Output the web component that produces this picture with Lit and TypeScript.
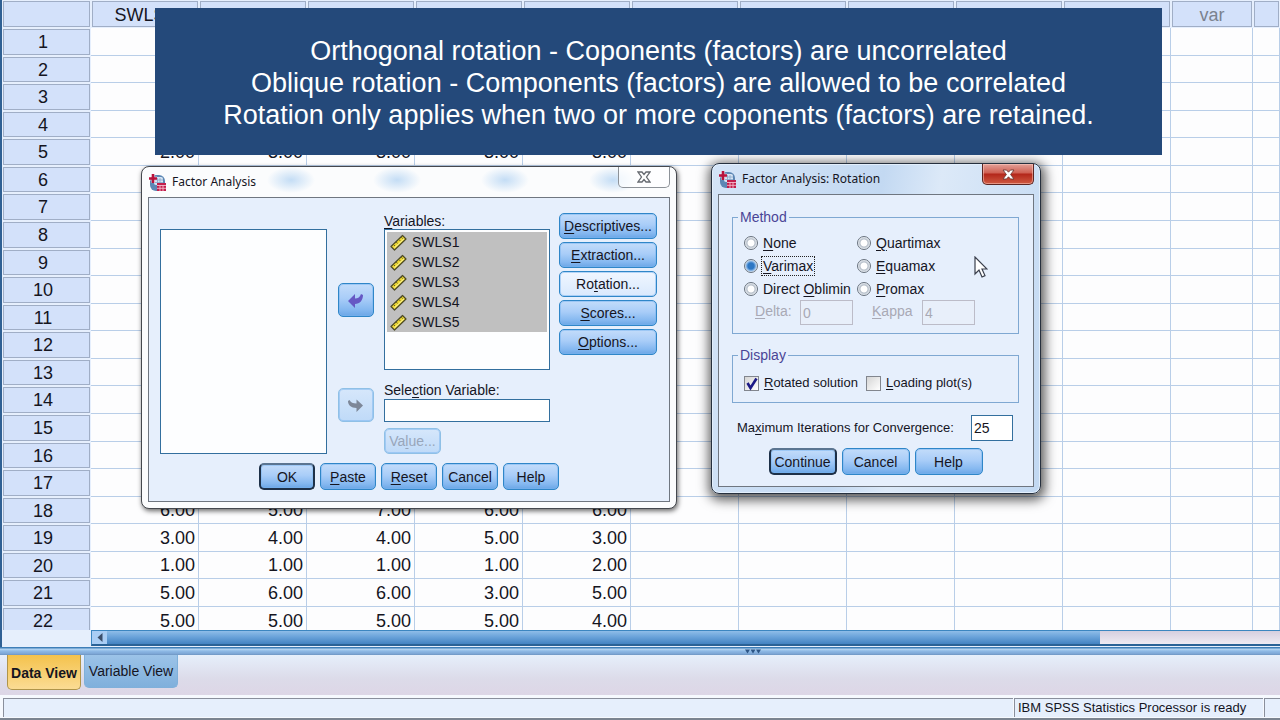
import { LitElement, html, css } from "lit";
import { customElement } from "lit/decorators.js";
import { classMap } from "lit/directives/class-map.js";

const ROWS = 22;
const VALUES: Record<number, string[]> = {
  5: ["2.00", "3.00", "3.00", "3.00", "3.00"],
  18: ["6.00", "5.00", "7.00", "6.00", "6.00"],
  19: ["3.00", "4.00", "4.00", "5.00", "3.00"],
  20: ["1.00", "1.00", "1.00", "1.00", "2.00"],
  21: ["5.00", "6.00", "6.00", "3.00", "5.00"],
  22: ["5.00", "5.00", "5.00", "5.00", "4.00"],
};
const HEADS = ["SWLS1", "SWLS2", "SWLS3", "SWLS4", "SWLS5", "var", "var", "var", "var", "var", "var", ""];

/** Text with one underlined access key; the key follows an ampersand. */
const mnemonic = (text: string) => {
  const i = text.indexOf("&");
  return i < 0 ? html`${text}` : html`${text.slice(0, i)}<u>${text[i + 1]}</u>${text.slice(i + 2)}`;
};

const sharedStyles = css`
  :host { display: block; font-family: "Liberation Sans", Arial, sans-serif; color: #15151f; }
  * { box-sizing: border-box; }
  u { text-decoration: underline; text-decoration-thickness: 1px; text-underline-offset: 2px; }
  button, input { font: inherit; color: inherit; margin: 0; }
  .btn {
    height: 27px; padding: 0; font-size: 14px; line-height: 24px; white-space: nowrap;
    border: 1px solid #2f86c8; border-radius: 5px;
    background: linear-gradient(#c3dcfa, #a9cdf8 45%, #85b8f0 80%, #6ba6e6);
    box-shadow: inset 0 0 0 1px rgba(120, 180, 240, 0.5);
  }
  .btn.default { border: 2px solid #1d3048; border-top-color: #5b7591; line-height: 22px; }
  .btn.pressed { background: linear-gradient(#f0f6ff, #d9e9fd); }
  .btn:disabled { color: #98a6ba; border-color: #8fc0e6; background: linear-gradient(#d6e7fb, #bfdaf8); }
  .window { border: 1px solid #45484e; border-radius: 8px; }
  .title { display: flex; align-items: center; gap: 5px; height: 30px; padding-left: 6px; position: relative; }
  .title h2 { margin: 0; font: 400 12px/16px "Noto Sans", "Open Sans", sans-serif; color: #15151f; }
  .close { display: grid; place-items: center; padding: 0; height: 21px; position: absolute; top: 0; right: 6px; border-radius: 0 0 5px 5px; }
  .body { margin: 0 6px 6px; border: 1px solid #6f7680; background: #e6effc; }
`;

const appIcon = html`<svg width="19" height="19" viewBox="0 0 19 19" aria-hidden="true">
  <rect x="2" y="2" width="15" height="16" rx="6" fill="#5c87b4" />
  <rect x="6" y="4" width="9" height="8" rx="2" fill="#d7e5f4" />
  <path d="M7 7h8M7 9.500h8M9.500 5v7M12 5v7" stroke="#86a5c8" stroke-width="0.800" />
  <path d="M5 1v9M1 5.500h8" stroke="#fff" stroke-width="4" opacity="0.500" />
  <path d="M5 1v9M1 5.500h8" stroke="#b8123c" stroke-width="2.600" />
  <rect x="9" y="10" width="9" height="8" fill="#c21d4c" />
  <path d="M9 12.500h9M9 15.300h9M12 12v6M15 12v6" stroke="#f3b9c9" stroke-width="0.900" />
</svg>`;

const rulerIcon = html`<svg width="18" height="17" viewBox="0 0 18 17" aria-hidden="true">
  <path d="M2 12.500L13.500 1.500L17 5L5.500 16Z" fill="#ecd732" stroke="#4c4a26" stroke-width="1.200" stroke-linejoin="round" />
  <path d="M4.500 10.500l1.500 1.500M7.200 8l1.500 1.500M9.900 5.500l1.500 1.500M12.300 3.200l1.500 1.500" stroke="#69631d" stroke-width="1" />
  <path d="M5.500 13.800L15 4.800" stroke="#fff7a0" stroke-width="1" />
</svg>`;

@customElement("factor-dialog")
class FactorDialog extends LitElement {
  static styles = [sharedStyles, css`
    .window {
      width: 536px; box-shadow: 1px 2px 5px rgba(0, 0, 0, 0.600);
      background:
        radial-gradient(ellipse 24px 13px at 149px 13px, #c4ddf5, transparent),
        radial-gradient(ellipse 24px 13px at 255px 13px, #c4ddf5, transparent),
        radial-gradient(ellipse 24px 13px at 363px 13px, #c4ddf5, transparent),
        radial-gradient(ellipse 24px 13px at 471px 13px, #c4ddf5, transparent),
        #fbfcfd;
    }
    .close { width: 52px; background: rgba(255, 255, 255, 0.700); border: 1px solid #8d9298; border-top: 0; }
    .body { padding: 15px 11px 11px; }
    .columns { display: grid; grid-template-columns: 167px 57px 166px 1fr; }
    .source { margin-top: 16px; height: 225px; background: #fdfeff; border: 1px solid #336f9e; }
    .arrows { display: flex; flex-direction: column; align-items: center; gap: 71px; padding-top: 70px; }
    .arrow { width: 36px; height: 34px; display: grid; place-items: center; }
    .fields { display: flex; flex-direction: column; align-items: flex-start; }
    .label { font-size: 14px; line-height: 16px; }
    .list { width: 100%; height: 141px; margin: 0 0 12px; padding: 2px; list-style: none; background: #fdfeff; border: 1px solid #336f9e; }
    .item { display: flex; align-items: center; gap: 5px; height: 20px; padding-left: 2px; background: #c0c0c0; font-size: 14px; }
    .picked { width: 100%; height: 23px; margin: 1px 0 6px; background: #fff; border: 1px solid #336f9e; }
    .value { width: 57px; height: 26px; }
    .side { display: grid; grid-auto-rows: 26px; gap: 3px; padding: 0 0 0 9px; justify-content: start; grid-template-columns: 98px; }
    .side .btn { height: 26px; }
    .foot { display: flex; justify-content: center; gap: 5px; padding-top: 9px; }
    .foot .btn { width: 56px; }
  `];

  render() {
    return html`<section class="window" aria-label="Factor Analysis">
      <header class="title">${appIcon}<h2>Factor Analysis</h2>
        <button class="close" aria-label="Close"><svg width="14" height="12" viewBox="0 0 14 12">
          <path d="M1 1h4l2 2.500L9 1h4L9.500 6L13 11H9L7 8.500L5 11H1L4.500 6Z" fill="#fff" stroke="#666a70" stroke-width="1.300" /></svg></button>
      </header>
      <div class="body">
        <div class="columns">
          <div class="source" role="listbox" aria-label="Available variables"></div>
          <div class="arrows">
            <button class="btn arrow" aria-label="Remove variable"><svg width="17" height="17" viewBox="0 0 17 17">
              <path d="M1 9L8 2v4.500c3 0 5-1.500 6-4.500l2 1c0 5-3 9-8 9v4Z" fill="#6658c4" /></svg></button>
            <button class="btn arrow" disabled aria-label="Add selection variable"><svg width="17" height="17" viewBox="0 0 17 17">
              <path d="M16 8.500L9.500 2.500v4C6 6.500 3.500 5.500 2.500 3L1 4c0 4 3 7 8.500 7v4Z" fill="#7d8798" /></svg></button>
          </div>
          <div class="fields">
            <span class="label" id="vars">${mnemonic("&Variables:")}</span>
            <ul class="list" aria-labelledby="vars">
              ${[1, 2, 3, 4, 5].map((n) => html`<li class="item">${rulerIcon}SWLS${n}</li>`)}
            </ul>
            <label class="label" for="sel">${mnemonic("Sele&ction Variable:")}</label>
            <input class="picked" id="sel" />
            <button class="btn value" disabled>${mnemonic("Va&lue...")}</button>
          </div>
          <div class="side">
            ${["&Descriptives...", "&Extraction...", "Ro&tation...", "&Scores...", "&Options..."].map(
              (t, i) => html`<button class=${classMap({ btn: true, pressed: i === 2 })}>${mnemonic(t)}</button>`)}
          </div>
        </div>
        <div class="foot">
          ${["OK", "&Paste", "&Reset", "Cancel", "Help"].map(
            (t, i) => html`<button class=${classMap({ btn: true, default: i === 0 })}>${mnemonic(t)}</button>`)}
        </div>
      </div>
    </section>`;
  }
}

@customElement("rotation-dialog")
class RotationDialog extends LitElement {
  static styles = [sharedStyles, css`
    .window {
      width: 330px; border-color: #26303e; box-shadow: 1px 3px 12px 3px rgba(0, 0, 0, 0.650), inset 0 0 0 1px #e3effc;
      background: linear-gradient(100deg, #d4e4f7, #c3d9f2 45%, #dce9f8 60%, #c1d8f2);
    }
    .close { width: 52px; border: 1px solid #5c2522; border-top: 0; background: linear-gradient(#e3a198, #cf5f52 45%, #b3261a 50%, #cf5a42); box-shadow: inset 0 0 0 1px rgba(255, 210, 200, 0.500); }
    .body { padding: 14px 14px 11px 13px; font-size: 14px; line-height: 16px; }
    .group { margin: 0; padding: 0 11px; border: 1px solid #7fa8d2; min-width: 0; }
    .group legend { margin-left: -6px; padding: 0 2px; color: #4a4596; line-height: 16px; }
    .method { height: 125px; padding-top: 6px; }
    .grid { display: grid; grid-template-columns: 113px 1fr; grid-auto-rows: 23px; }
    .opt { display: flex; align-items: center; gap: 4px; white-space: nowrap; }
    .text { padding: 1px; }
    .focused { outline: 1px dotted #222; }
    .radio { appearance: none; width: 14px; height: 14px; border: 1px solid #69737f; border-radius: 50%; background: radial-gradient(circle, #fff 3px, #b4bdc8 4px, #eef2f7 6px); }
    .radio:checked { background: radial-gradient(circle, #2d77c4 3px, #5e9ada 4px, #dbe8f5 6px); }
    .extra { display: grid; grid-template-columns: 45px 72px 50px 53px; padding-left: 11px; color: #a9a9b5; align-items: start; }
    .extra input { width: 53px; height: 25px; padding: 0 2px; background: #e8effa; border: 1px solid #bcbcc8; color: #a9a9b5; }
    .extra label { padding-top: 3px; }
    .display { margin-top: 13px; height: 56px; padding-top: 11px; }
    .checks { display: grid; grid-template-columns: 122px 1fr; font-size: 13px; }
    .check { appearance: none; width: 15px; height: 15px; border: 1px solid #82868e; background: linear-gradient(135deg, #d5d5d5, #fff); }
    .tick { position: relative; display: grid; }
    .tick svg { position: absolute; left: 0; top: 0; pointer-events: none; }
    .max { display: flex; align-items: center; justify-content: space-between; padding: 0 6px 0 5px; margin-top: 12px; white-space: nowrap; }
    .max label { font-size: 13px; }
    .max input { width: 42px; height: 26px; padding: 0 2px; background: #fff; border: 1px solid #336f9e; }
    .foot { display: flex; justify-content: center; gap: 5px; margin-top: 7px; }
    .foot .btn { width: 68px; }
  `];

  radio(text: string, on = false) {
    return html`<label class="opt"><input class="radio" type="radio" name="method" .checked=${on} />
      <span class=${classMap({ text: true, focused: on })}>${mnemonic(text)}</span></label>`;
  }

  render() {
    return html`<section class="window" aria-label="Factor Analysis: Rotation">
      <header class="title">${appIcon}<h2>Factor Analysis: Rotation</h2>
        <button class="close" aria-label="Close"><svg width="13" height="11" viewBox="0 0 13 11">
          <path d="M1 1h3.500l2 2.200L8.500 1H12L8.600 5.500L12 10H8.500L6.500 7.800L4.500 10H1L4.400 5.500Z" fill="#fff" stroke="#6e3a36" stroke-width="0.900" /></svg></button>
      </header>
      <div class="body">
        <fieldset class="group method"><legend>Method</legend>
          <div class="grid">
            ${this.radio("&None")}${this.radio("&Quartimax")}
            ${this.radio("&Varimax", true)}${this.radio("&Equamax")}
            ${this.radio("Direct &Oblimin")}${this.radio("&Promax")}
          </div>
          <div class="extra">
            <label for="delta">${mnemonic("&Delta:")}</label><input id="delta" value="0" disabled />
            <label for="kappa">${mnemonic("&Kappa")}</label><input id="kappa" value="4" disabled />
          </div>
        </fieldset>
        <fieldset class="group display"><legend>Display</legend>
          <div class="checks">
            <label class="opt"><span class="tick"><input class="check" type="checkbox" .checked=${true} />
              <svg width="17" height="16" viewBox="0 0 17 16"><path d="M3.500 7L6.500 12L12.500 2.500" fill="none" stroke="#1c1a86" stroke-width="2.600" /></svg></span>
              <span class="text">${mnemonic("&Rotated solution")}</span></label>
            <label class="opt"><input class="check" type="checkbox" /><span class="text">${mnemonic("&Loading plot(s)")}</span></label>
          </div>
        </fieldset>
        <div class="max"><label for="iter">${mnemonic("Ma&ximum Iterations for Convergence:")}</label><input id="iter" value="25" /></div>
        <div class="foot">
          ${["Continue", "Cancel", "Help"].map((t, i) => html`<button class=${classMap({ btn: true, default: i === 0 })}>${t}</button>`)}
        </div>
      </div>
    </section>`;
  }
}

@customElement("app-root")
class AppRoot extends LitElement {
  static styles = [sharedStyles, css`
    :host { display: flex; flex-direction: column; height: 100vh; position: relative; overflow: hidden; background: #e6effc; }
    .sheet { flex: 1; min-height: 0; overflow: hidden; background: #fdfdfe; border-left: 2px solid #2f6094; }
    table { width: 100%; table-layout: fixed; border-collapse: separate; border-spacing: 0; font-size: 18px; line-height: 16px; }
    .gutter { width: 89px; }
    .col { width: 108px; }
    .narrow { width: 82px; }
    th { padding: 0; font-weight: 400; background: #d3e1fa; box-shadow: inset 0 0 0 1px #e6effd, inset 0 0 0 2px #a0aec6; }
    thead th { height: 28px; padding-top: 2px; }
    thead .unused { color: #7b828e; }
    tbody th { padding-right: 7px; }
    td { padding: 0 3px 0 0; text-align: right; border-right: 1px solid #b9cee8; border-bottom: 1px solid #b9cee8; }
    tbody tr { height: 27px; }
    /* Four taller rows in every seven. */
    tbody tr:nth-child(7n + 1), tbody tr:nth-child(7n + 3), tbody tr:nth-child(7n + 5), tbody tr:nth-child(7n) { height: 28px; }
    .scroll { display: flex; height: 17px; padding-left: 89px; border-left: 2px solid #2f6094; background: #e6effc; }
    .track { flex: 1; display: flex; border: 1px solid #3c86c0; border-bottom: 2px solid #2a6296; border-right: 0; height: 16px; background: linear-gradient(#d6cfdf, #eeeaf2); }
    .left { width: 15px; padding: 0; border: 0; background: #a9cdf4; display: grid; place-items: center; }
    .thumb { width: 83.6%; background: linear-gradient(#8fbde8, #6aa3da 45%, #4383c1); }
    .split { height: 8px; display: flex; justify-content: center; align-items: center; padding-left: 226px; background: linear-gradient(#3f7fb8 1px, #b9d7f3 2px, #8ebae6 4px, #7ba4d4 7px, #6c93be); }
    .tabs { display: flex; align-items: flex-start; gap: 3px; height: 40px; padding-left: 7px; background: linear-gradient(#e6effb, #dcdbe9 60%, #ddd6e6); }
    .tab { height: 33px; padding: 0; border: 1px solid #7fb0da; border-top: 0; border-radius: 0 0 5px 5px; font-size: 14px; width: 94px; background: linear-gradient(#9cc3e8, #7fb0dc); white-space: nowrap; }
    .tab.active { height: 35px; width: 74px; padding-top: 2px; font-weight: 700; border-color: #b0954a; background: linear-gradient(#f4c24c, #fbdc94); }
    .status { display: grid; grid-template-columns: 1fr 249px 16px; gap: 1px; height: 25px; padding: 3px 0 1px 3px; background: #f6f9fe; border-bottom: 2px solid #7b8490; font-size: 13px; line-height: 18px; white-space: nowrap; }
    .cell { padding-left: 3px; background: #e6effc; border-top: 1px solid #8a8f9c; border-left: 1px solid #8a8f9c; }
    .banner { position: absolute; left: 155px; right: 118px; top: 8px; height: 147px; margin: 0; padding-top: 27px; text-align: center; color: #fff; background: #24497a; font-size: 27px; line-height: 32px; white-space: nowrap; }
    .first { position: absolute; left: 141px; top: 166px; }
    .second { position: absolute; left: 711px; top: 163px; }
    .pointer { position: absolute; left: 974px; top: 256px; }
  `];

  render() {
    return html`
      <main class="sheet">
        <table>
          <colgroup><col class="gutter" />${HEADS.map((_, i) => html`<col class=${i < 10 ? "col" : i === 10 ? "narrow" : ""} />`)}</colgroup>
          <thead><tr><th></th>${HEADS.map((h) => html`<th class=${h === "var" ? "unused" : ""} scope="col">${h}</th>`)}</tr></thead>
          <tbody>
            ${Array.from({ length: ROWS }, (_, r) => html`<tr><th scope="row">${r + 1}</th>
              ${HEADS.map((_h, c) => html`<td>${VALUES[r + 1]?.[c] ?? ""}</td>`)}</tr>`)}
          </tbody>
        </table>
      </main>
      <div class="scroll"><div class="track">
        <button class="left" aria-label="Scroll left"><svg width="6" height="9" viewBox="0 0 6 9"><path d="M5.500 0v9L0.500 4.500Z" fill="#3b4f6b" /></svg></button>
        <div class="thumb"></div>
      </div></div>
      <div class="split"><svg width="16" height="5" viewBox="0 0 16 5"><path d="M0 0.500h5L2.500 4.500ZM5.500 0.500h5L8 4.500ZM11 0.500h5L13.500 4.500Z" fill="#2c5586" /></svg></div>
      <nav class="tabs"><button class="tab active">Data View</button><button class="tab">Variable View</button></nav>
      <footer class="status"><div class="cell"></div><div class="cell">IBM SPSS Statistics Processor is ready</div><div class="cell"></div></footer>
      <factor-dialog class="first"></factor-dialog>
      <rotation-dialog class="second"></rotation-dialog>
      <p class="banner">Orthogonal rotation - Coponents (factors) are uncorrelated<br />Oblique rotation - Components (factors) are allowed to be correlated<br />Rotation only applies when two or more coponents (factors) are retained.</p>
      <svg class="pointer" width="14" height="22" viewBox="0 0 14 22" aria-hidden="true">
        <path d="M1 1v17l4-4l3 7l3-1.400l-3-6.600h5Z" fill="#fff" stroke="#3a3f4c" stroke-width="1.200" />
      </svg>
    `;
  }
}
